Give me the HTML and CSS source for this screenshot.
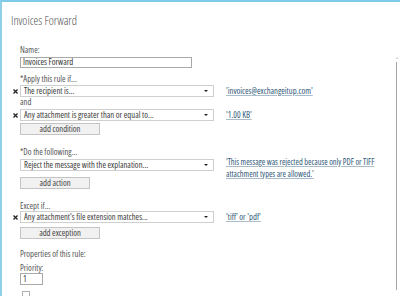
FILE: index.html
```html
<!DOCTYPE html>
<html>
<head>
<meta charset="utf-8">
<link rel="stylesheet" href="styles.css">
</head>
<body>
<div class="frame">
  <div class="main">
    <h1 class="title">Invoices Forward</h1>
    <div class="form">
      <div class="label l-name">Name:</div>
      <div class="input name-input">Invoices Forward</div>

      <div class="label l-apply">*Apply this rule if...</div>
      <div class="row r1">
        <span class="x"><svg width="5" height="5" viewBox="0 0 5 5"><path d="M0.5 0.5L4.5 4.5M4.5 0.5L0.5 4.5" stroke="#222" stroke-width="1.3"/></svg></span>
        <div class="select">The recipient is...<span class="arrow"></span></div>
        <a class="link">'invoices@exchangeitup.com'</a>
      </div>
      <div class="label l-and">and</div>
      <div class="row r2">
        <span class="x"><svg width="5" height="5" viewBox="0 0 5 5"><path d="M0.5 0.5L4.5 4.5M4.5 0.5L0.5 4.5" stroke="#222" stroke-width="1.3"/></svg></span>
        <div class="select">Any attachment is greater than or equal to...<span class="arrow"></span></div>
        <a class="link">'1.00 KB'</a>
      </div>
      <div class="button b-cond">add condition</div>

      <div class="label l-do">*Do the following...</div>
      <div class="row r3">
        <span class="x"></span>
        <div class="select">Reject the message with the explanation...<span class="arrow"></span></div>
        <a class="link two">'This message was rejected because only PDF or TIFF<br>attachment types are allowed.'</a>
      </div>
      <div class="button b-action">add action</div>

      <div class="label l-except">Except if...</div>
      <div class="row r4">
        <span class="x"><svg width="5" height="5" viewBox="0 0 5 5"><path d="M0.5 0.5L4.5 4.5M4.5 0.5L0.5 4.5" stroke="#222" stroke-width="1.3"/></svg></span>
        <div class="select">Any attachment's file extension matches...<span class="arrow"></span></div>
        <a class="link">'tiff' or 'pdf'</a>
      </div>
      <div class="button b-exc">add exception</div>

      <div class="label l-props">Properties of this rule:</div>
      <div class="label l-prio">Priority:</div>
      <div class="input prio-input">1</div>
      <div class="check"></div>
    </div>
  </div>
  <div class="scroll">
    <span class="up"></span>
    <span class="track"></span>
  </div>
</div>
</body>
</html>
```
FILE: styles.css
```css
html, body {
  margin: 0;
  padding: 0;
}
body {
  width: 400px;
  height: 296px;
  overflow: hidden;
  background: #fff;
  font-family: "Open Sans", "Liberation Sans", sans-serif;
  font-stretch: 75%;
  font-size: 8.6px;
  color: #4a4a4a;
}
.frame {
  height: 296px;
  box-sizing: border-box;
  border-top: 2px solid #7ccbe9;
  border-left: 2px solid #8fd0e8;
  display: flex;
}
.main {
  flex: 1;
  padding: 12px 0 0 9px;
}
.title {
  margin: 0;
  font-size: 12px;
  line-height: 14px;
  font-weight: 300;
  color: #505050;
}
.form {
  padding-left: 9px;
  display: flex;
  flex-direction: column;
  align-items: flex-start;
}
.label {
  line-height: 10px;
  height: 10px;
  color: #555;
  white-space: nowrap;
}
.l-name { margin-top: 17px; }
.input {
  box-sizing: border-box;
  border: 1px solid #a9a9a9;
  background: #fff;
  color: #333;
  padding-left: 2px;
}
.name-input {
  margin-top: 2px;
  width: 172px;
  height: 11px;
  line-height: 9px;
}
.l-apply { margin-top: 6px; }
.row {
  display: flex;
  align-items: flex-start;
  margin-left: -8px;
}
.x {
  width: 8px;
  height: 12px;
  display: flex;
  align-items: center;
  justify-content: center;
  flex: none;
}
.x svg { display: block; margin-left: -1px; }
.select {
  box-sizing: border-box;
  width: 194px;
  height: 12px;
  line-height: 10px;
  border: 1px solid #cfcfcf;
  background: #fff;
  color: #3a3a3a;
  padding-left: 3px;
  position: relative;
  flex: none;
  white-space: nowrap;
}
.arrow {
  position: absolute;
  right: 5px;
  top: 4px;
  width: 0;
  height: 0;
  border-left: 2px solid transparent;
  border-right: 2px solid transparent;
  border-top: 2px solid #222;
}
.link {
  margin-left: 12px;
  color: #2f5878;
  line-height: 12px;
  white-space: nowrap;
  text-decoration: underline;
  text-decoration-color: #a9bccb;
  text-underline-offset: 1px;
}
.link.two {
  display: block;
  font-size: 8.3px;
  line-height: 11.5px;
  margin-top: -3px;
  margin-bottom: -2px;
}
.r1 { margin-top: 1px; }
.l-and { margin-top: 0; }
.r2 { margin-top: 2px; }
.button {
  box-sizing: border-box;
  height: 12px;
  line-height: 10px;
  border: 1px solid #c4c4c4;
  background: #f1f1f1;
  color: #444;
  text-align: center;
  white-space: nowrap;
}
.b-cond { margin-top: 2px; width: 80px; }
.l-do { margin-top: 12px; }
.r3 { margin-top: 2px; }
.b-action { margin-top: 0; width: 70px; }
.l-except { margin-top: 12px; }
.r4 { margin-top: 0; }
.b-exc { margin-top: 4px; width: 80px; }
.l-props { margin-top: 10px; }
.l-prio { margin-top: 4px; }
.prio-input {
  width: 23px;
  height: 12px;
  line-height: 10px;
}
.check {
  margin-top: 6px;
  margin-left: 2px;
  width: 8px;
  height: 8px;
  box-sizing: border-box;
  border: 1px solid #b0b0b0;
}
.scroll {
  width: 3px;
  margin-right: 2px;
  display: flex;
  flex-direction: column;
  align-items: center;
  padding: 55px 0 6px;
}
.up {
  width: 0;
  height: 0;
  border-left: 2px solid transparent;
  border-right: 2px solid transparent;
  border-bottom: 2px solid #ddd;
  margin-bottom: 3px;
}
.track {
  flex: 1;
  width: 1px;
  background: #a5a5a5;
}
```
